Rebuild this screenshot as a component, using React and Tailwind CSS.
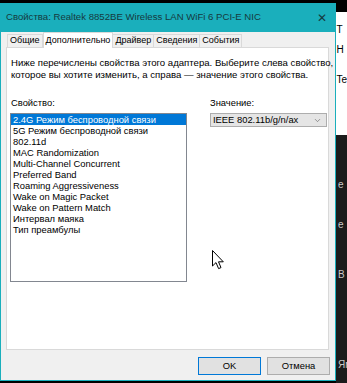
import { ChevronDown } from 'lucide-react'

const items = [
  '2.4G Режим беспроводной связи',
  '5G Режим беспроводной связи',
  '802.11d',
  'MAC Randomization',
  'Multi-Channel Concurrent',
  'Preferred Band',
  'Roaming Aggressiveness',
  'Wake on Magic Packet',
  'Wake on Pattern Match',
  'Интервал маяка',
  'Тип преамбулы',
]

const tabs = ['Общие', 'Дополнительно', 'Драйвер', 'Сведения', 'События']

function Cursor() {
  return (
    <svg width="13" height="20" viewBox="0 0 13 20" className="absolute left-[212px] top-[250px]">
      <path d="M0.5 0.5 L0.5 16 L4 12.6 L6.6 18.6 L9 17.6 L6.5 11.8 L11.3 11.8 Z" fill="#fff" stroke="#000" strokeWidth="1" strokeLinejoin="miter" />
    </svg>
  )
}

export default function App() {
  return (
    <div className="relative w-[347px] h-[383px] overflow-hidden bg-black font-['Liberation_Sans',Arial,sans-serif] text-[9.4px] text-black whitespace-nowrap">
      <div className="flex h-full pt-[3px]">
        {/* dialog */}
        <div className="flex h-[378px] w-[336px] flex-col border border-t-0 border-[#1aafbc] bg-[#f0f0f0]">
          <div className="flex h-[29px] items-center justify-between bg-[#1aafbc] pl-[5px] pr-[8px] text-[#163a3e]">
            <span className="text-[9.6px]">Свойства: Realtek 8852BE Wireless LAN WiFi 6 PCI-E NIC</span>
            <span className="text-[12px] leading-none font-light">✕</span>
          </div>

          {/* tabs */}
          <div className="flex h-[15px] items-end pl-[6px] text-[9px]">
            {tabs.map((t, i) =>
              i === 1 ? (
                <div key={t} className="relative z-10 -mb-px flex h-[16px] items-center border border-b-0 border-[#d9d9d9] bg-white px-[2px]">
                  {t}
                </div>
              ) : (
                <div key={t} className="flex h-[13px] items-center border border-b-0 border-[#d9d9d9] bg-[#f0f0f0] px-[2px] -ml-px first:ml-0">
                  {t}
                </div>
              )
            )}
          </div>

          {/* panel */}
          <div className="ml-[5px] mr-[6px] h-[303px] border border-[#d9d9d9] bg-white pl-[4px] pt-[9px]">
            <p className="text-[9.6px] leading-[12px]">
              Ниже перечислены свойства этого адаптера. Выберите слева свойство,
              <br />
              которое вы хотите изменить, а справа — значение этого свойства.
            </p>
            <div className="mt-[16px] flex">
              <div className="w-[177px]">
                <div className="mb-[4px] leading-[12px]">Свойство:</div>
                <div className="h-[169px] w-[177px] border border-[#828790] -ml-px">
                  {items.map((it, i) => (
                    <div
                      key={it}
                      className={`h-[11px] pl-[2px] leading-[11px] ${i === 0 ? 'bg-[#0078d7] text-white' : ''}`}
                    >
                      {it}
                    </div>
                  ))}
                </div>
              </div>
              <div className="ml-[22px]">
                <div className="mb-[4px] leading-[12px]">Значение:</div>
                <div className="flex h-[14px] w-[117px] items-center justify-between border border-[#adadad] bg-[#e5e5e5] pl-[2px] pr-[4px]">
                  <span>IEEE 802.11b/g/n/ax</span>
                  <ChevronDown size={9} strokeWidth={1.5} className="text-[#555]" />
                </div>
              </div>
            </div>
          </div>

          {/* buttons */}
          <div className="flex justify-end gap-[6px] pr-[5px] pt-[7px]">
            <button className="h-[18px] w-[63px] border border-[#0078d7] bg-[#e1e1e1] text-[9.4px]">OK</button>
            <button className="h-[18px] w-[63px] border border-[#adadad] bg-[#e1e1e1] text-[9.4px]">Отмена</button>
          </div>
        </div>

        {/* background window edge */}
        <div className="flex flex-1 flex-col overflow-hidden">
          <div className="mt-[9px] flex h-[123px]">
            <div className="w-[2px] bg-black" />
            <div className="flex-1 bg-white pt-[8px] text-[10px] leading-[20px] text-black">
              <div>T</div>
              <div>Н</div>
              <div className="mt-[10px]">Te</div>
            </div>
          </div>
          <div className="flex flex-1 flex-col bg-[#1b1b1b] pl-[2px] pt-[40px] text-[10px] leading-[20px] text-[#c8c8c8]">
            <div>e</div>
            <div className="mt-[20px]">e</div>
            <div className="mt-[30px]">В</div>
            <div className="mt-[70px]">Ям</div>
          </div>
        </div>
      </div>
      <Cursor />
    </div>
  )
}
